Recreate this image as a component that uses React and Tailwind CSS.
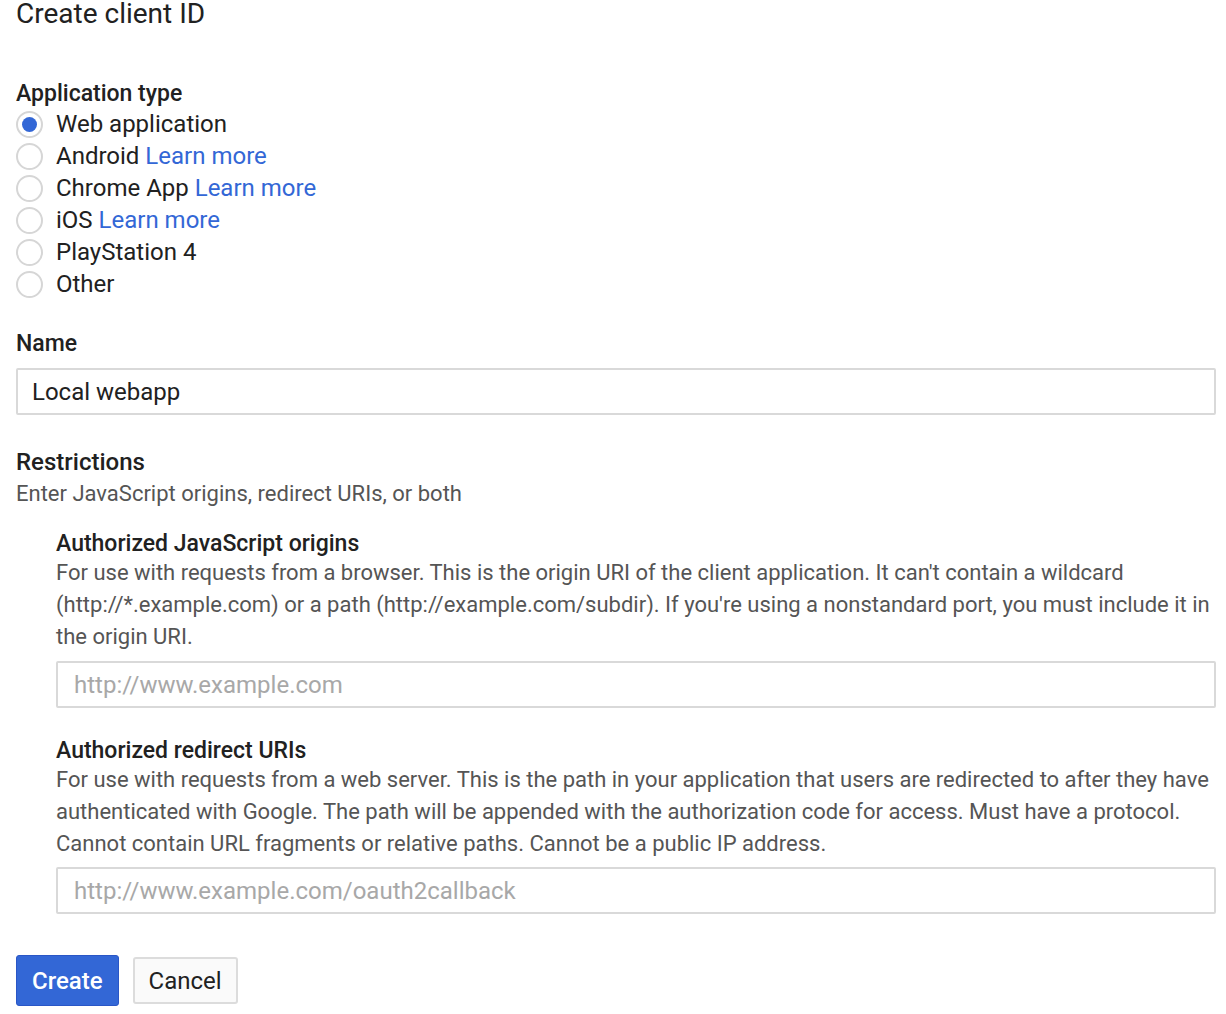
import React, { useState } from "react";

const types = [
  { id: "web", label: "Web application" },
  { id: "android", label: "Android", learn: true },
  { id: "chrome", label: "Chrome App", learn: true },
  { id: "ios", label: "iOS", learn: true },
  { id: "ps4", label: "PlayStation 4" },
  { id: "other", label: "Other" },
];

const App = () => {
  const [appType, setAppType] = useState("web");
  const [name, setName] = useState("Local webapp");

  return (
    <div className="bg-white min-h-screen pl-4 pr-[10px] text-[#212121] font-['Roboto',sans-serif]">
      <h1 className="text-[28px] leading-[28px] font-normal">Create client ID</h1>

      {/* Application type */}
      <div className="mt-[52px]">
        <div className="text-[23px] leading-[28px] font-medium">Application type</div>
        <div className="flex flex-col">
          {types.map((t) => (
            <label key={t.id} className="flex items-center h-[32px] text-[24px] cursor-pointer">
              <span
                onClick={() => setAppType(t.id)}
                className="w-[27px] h-[27px] rounded-full border-2 border-[#d6d6d6] flex items-center justify-center shrink-0"
              >
                {appType === t.id && <span className="w-[15px] h-[15px] rounded-full bg-[#3367d6]" />}
              </span>
              <span className="ml-[13px]">
                {t.label}
                {t.learn && <> <a href="#" className="text-[#3367d6]">Learn more</a></>}
              </span>
            </label>
          ))}
        </div>
      </div>

      {/* Name */}
      <div className="mt-[30px]">
        <div className="text-[23px] leading-[28px] font-medium">Name</div>
        <input
          value={name}
          onChange={(e) => setName(e.target.value)}
          className="mt-[10px] w-full h-[47px] border-2 border-[#d9d9d9] rounded-[2px] px-[14px] text-[24px] outline-none"
        />
      </div>

      {/* Restrictions */}
      <div className="mt-[33px]">
        <div className="text-[24px] leading-[28px] font-medium">Restrictions</div>
        <div className="mt-[2px] text-[22px] leading-[32px] text-[#555]">Enter JavaScript origins, redirect URIs, or both</div>

        <div className="pl-[40px] mt-[21px]">
          <div className="text-[23px] leading-[26px] font-medium">Authorized JavaScript origins</div>
          <p className="text-[22px] leading-[32px] text-[#555]">
            For use with requests from a browser. This is the origin URI of the client application. It can't contain a wildcard (http://*.example.com) or a path (http://example.com/subdir). If you're using a nonstandard port, you must include it in the origin URI.
          </p>
          <input
            placeholder="http://www.example.com"
            className="mt-[8px] w-full h-[47px] border-2 border-[#d9d9d9] rounded-[2px] px-[16px] text-[24px] outline-none placeholder:text-[#a8a8a8]"
          />

          <div className="mt-[30px] text-[23px] leading-[26px] font-medium">Authorized redirect URIs</div>
          <p className="text-[22px] leading-[32px] text-[#555]">
            For use with requests from a web server. This is the path in your application that users are redirected to after they have authenticated with Google. The path will be appended with the authorization code for access. Must have a protocol. Cannot contain URL fragments or relative paths. Cannot be a public IP address.
          </p>
          <input
            placeholder="http://www.example.com/oauth2callback"
            className="mt-[7px] w-full h-[47px] border-2 border-[#d9d9d9] rounded-[2px] px-[16px] text-[24px] outline-none placeholder:text-[#a8a8a8]"
          />
        </div>
      </div>

      {/* Actions */}
      <div className="flex items-center gap-[14px] mt-[41px]">
        <button className="h-[51px] px-[15px] bg-[#3367d6] border border-[#2a56c6] rounded-[3px] text-white text-[24px] font-medium">
          Create
        </button>
        <button className="h-[47px] px-[14px] bg-[#fafafa] border-2 border-[#dcdcdc] rounded-[3px] text-[#212121] text-[24px]">
          Cancel
        </button>
      </div>
    </div>
  );
};

export default App;
